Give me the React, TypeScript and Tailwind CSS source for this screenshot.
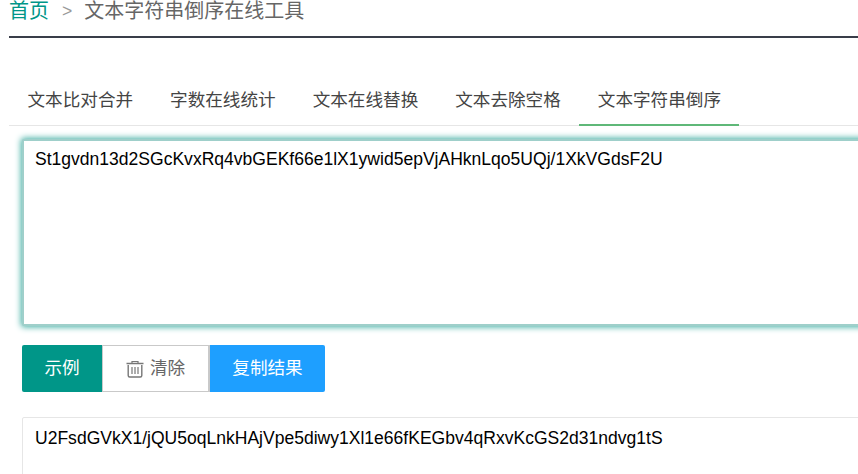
const FONT = "font-['Liberation_Sans','Noto_Sans_CJK_SC',sans-serif]"

const tabs = ["文本比对合并", "字数在线统计", "文本在线替换", "文本去除空格", "文本字符串倒序"]

function TrashIcon() {
    return (
        <svg width="18" height="18" viewBox="0 0 18 18" fill="none" stroke="#777" strokeWidth="1.2">
            <path d="M6 3V1.500h6V3" />
            <path d="M0.500 3.500h17" strokeWidth="1.500" />
            <path d="M2.200 5v10.500q0 1.500 1.500 1.500h10.600q1.500 0 1.500-1.500V5" strokeWidth="1.400" />
            <path d="M6 7v7M9 7v7M12 7v7" />
        </svg>
    )
}

export default function App() {
    return (
        <div className={`h-[474px] w-[858px] overflow-hidden bg-white ${FONT}`}>
            <div className="w-[900px] pl-[9px]">
                <div className="flex h-[38px] items-start border-b-2 border-[#393D49] text-[20px] leading-[22px] text-[#666]">
                    <span className="text-[#009688]">首页</span>
                    <span className="ml-[13px] mr-[12px] text-[17.6px] text-[#999]">&gt;</span>
                    <span>文本字符串倒序在线工具</span>
                </div>

                <div className="mt-[46px] flex h-[42px] border-b border-[#e6e6e6]">
                    {tabs.map((tab, i) => (
                        <div
                            key={tab}
                            className={`h-[42px] px-[18.5px] text-[17.6px] leading-[32px] text-[#444] ${i === 4 ? "border-b-2 border-[#5FB878]" : ""}`}
                        >
                            {tab}
                        </div>
                    ))}
                </div>

                <div className="ml-[13px] mt-[13px]">
                    <div className="h-[187px] rounded-[2px] border-2 border-[#9fcfca] bg-white pl-[11px] pt-[8px] text-[17.55px] leading-[20px] text-black shadow-[0_0_6px_1px_#3faea3]">
                        St1gvdn13d2SGcKvxRq4vbGEKf66e1lX1ywid5epVjAHknLqo5UQj/1XkVGdsF2U
                    </div>

                    <div className="mt-[19px] flex h-[47px] text-[17.6px]">
                        <button className="w-[80px] rounded-l-[2px] bg-[#009688] text-white">示例</button>
                        <button className="flex w-[108px] items-center justify-center gap-[6px] border border-r-2 border-[#C9C9C9] bg-white text-[#666]">
                            <TrashIcon />
                            清除
                        </button>
                        <button className="w-[115px] rounded-r-[2px] bg-[#1E9FFF] text-white">复制结果</button>
                    </div>

                    <div className="mt-[25px] h-[100px] rounded-[2px] border border-[#e6e6e6] pl-[12px] pt-[10px] text-[17.55px] leading-[20px] text-black">
                        U2FsdGVkX1/jQU5oqLnkHAjVpe5diwy1Xl1e66fKEGbv4qRxvKcGS2d31ndvg1tS
                    </div>
                </div>
            </div>
        </div>
    )
}
